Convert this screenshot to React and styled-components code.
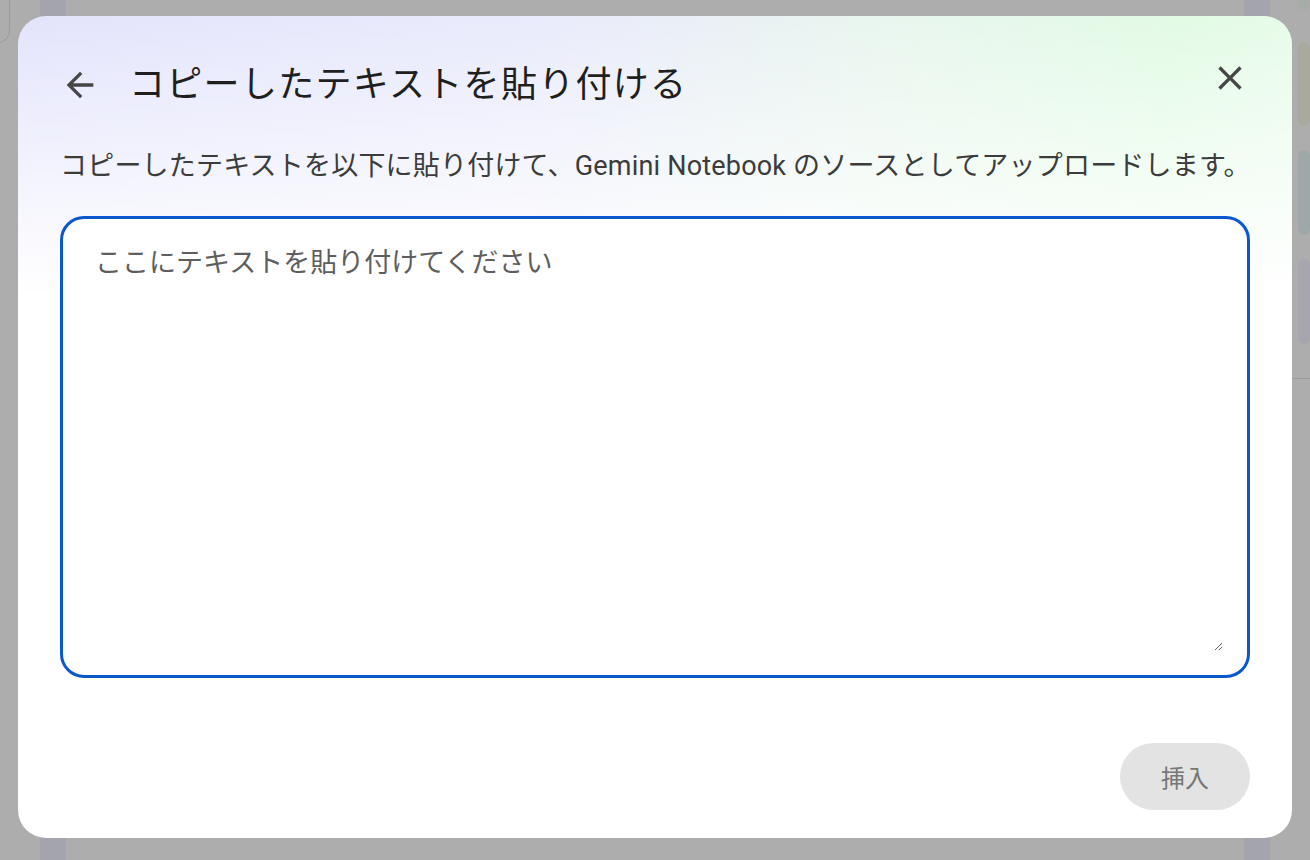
import React from "react";
import styled, { createGlobalStyle } from "styled-components";

const GlobalStyle = createGlobalStyle`
  html, body {
    margin: 0;
    padding: 0;
    width: 100%;
    height: 100%;
    overflow: hidden;
  }
  body {
    font-family: Roboto, "Noto Sans CJK JP", sans-serif;
  }
  #root { height: 100%; }
`;

const Page = styled.div`
  position: relative;
  width: 100vw;
  height: 100vh;
  overflow: hidden;
  background: #adadad;
`;

/* Dimmed app shell behind the modal */
const Shell = styled.div`
  display: flex;
  height: 100%;
`;

const LeftEdge = styled.div`
  width: 40px;
  flex: none;
`;

const EdgeTab = styled.div`
  width: 20px;
  height: 45px;
  margin-left: -10px;
  margin-top: -2px;
  border: 1px solid #9b9b9b;
  border-radius: 0 0 12px 0;
  box-sizing: border-box;
`;

const Rail = styled.div`
  width: 26px;
  flex: none;
  background: #a4a4ae;
`;

const Main = styled.div`
  flex: 1;
`;

const SidePanel = styled.div`
  width: 40px;
  flex: none;
  display: flex;
  flex-direction: column;
  gap: 24px;
  padding: 0 0 0 28px;
  box-sizing: border-box;
`;

const SideCard = styled.div`
  height: ${(p) => p.$h}px;
  margin-top: ${(p) => p.$mt || 0}px;
  border-radius: 10px;
  background: ${(p) => p.$c};
`;

const SideRule = styled.div`
  height: 1px;
  margin-left: -6px;
  margin-top: 10px;
  background: #9a9a9a;
`;

/* Modal layer */
const Scrim = styled.div`
  position: absolute;
  inset: 0;
  display: flex;
  padding: 16px 18px 22px 18px;
  box-sizing: border-box;
`;

const Dialog = styled.div`
  position: relative;
  flex: 1;
  min-width: 0;
  display: flex;
  flex-direction: column;
  padding: 49px 42px 28px 42px;
  box-sizing: border-box;
  border-radius: 28px;
  background:
    linear-gradient(to bottom, rgba(255, 255, 255, 0) 0, #ffffff 280px),
    linear-gradient(100deg, #e3e4fc 0%, #eaebfb 38%, #e9f6ee 62%, #e2fbe5 82%, #eefbf0 100%);
`;

const Header = styled.div`
  display: flex;
  align-items: center;
  height: 40px;
  gap: 29px;
`;

const IconButton = styled.button`
  width: 40px;
  height: 40px;
  flex: none;
  display: flex;
  align-items: center;
  justify-content: center;
  padding: 0;
  border: none;
  background: transparent;
  color: #444746;
  cursor: pointer;
`;

const CloseButton = styled(IconButton)`
  position: absolute;
  top: 42px;
  right: 42px;
`;

const Title = styled.h1`
  margin: 0;
  font-family: Roboto, "Noto Sans CJK JP", sans-serif;
  font-size: 36px;
  line-height: 40px;
  font-weight: 400;
  color: #1f1f1f;
  letter-spacing: 1.3px;
`;

const Description = styled.p`
  margin: 43px 0 0 0;
  font-size: 27px;
  line-height: 36px;
  color: #3c3c3c;
  letter-spacing: 0.2px;
  white-space: nowrap;
`;

const Field = styled.div`
  margin-top: 32px;
  height: 462px;
  display: flex;
  padding: 26px 24px 24px 32px;
  box-sizing: border-box;
  border: 3px solid #0b57d0;
  border-radius: 24px;
  background: #ffffff;
`;

const TextArea = styled.textarea`
  flex: 1;
  min-width: 0;
  border: none;
  outline: none;
  padding: 0;
  margin: 0;
  resize: vertical;
  background: transparent;
  font-family: Roboto, "Noto Sans CJK JP", sans-serif;
  font-size: 27px;
  line-height: 36px;
  color: #1f1f1f;
  caret-color: #0b57d0;

  &::placeholder {
    color: #5e5e5e;
    opacity: 1;
  }
`;

const Footer = styled.div`
  margin-top: 65px;
  display: flex;
  justify-content: flex-end;
`;

const InsertButton = styled.button`
  width: 130px;
  height: 67px;
  border: none;
  border-radius: 34px;
  background: #e3e3e3;
  color: #767676;
  font-family: Roboto, "Noto Sans CJK JP", sans-serif;
  font-size: 24px;
  cursor: default;
`;

const ArrowBack = () => (
  <svg width="40" height="40" viewBox="0 0 24 24" fill="currentColor">
    <path d="M20 11H7.83l5.59-5.59L12 4l-8 8 8 8 1.41-1.41L7.83 13H20v-2z" />
  </svg>
);

const CloseIcon = () => (
  <svg width="42" height="42" viewBox="0 0 24 24" fill="currentColor">
    <path d="M19 6.41L17.59 5 12 10.59 6.41 5 5 6.41 10.59 12 5 17.59 6.41 19 12 13.41 17.59 19 19 17.59 13.41 12z" />
  </svg>
);

export default function App() {
  return (
    <Page>
      <GlobalStyle />
      <Shell>
        <LeftEdge>
          <EdgeTab />
        </LeftEdge>
        <Rail />
        <Main />
        <Rail />
        <SidePanel>
          <SideCard $h={12} $mt={-2} $c="#a5ada6" />
          <SideCard $h={84} $mt={8} $c="#aaa99f" />
          <SideCard $h={85} $c="#9fa7a9" />
          <SideCard $h={85} $c="#a7a6af" />
          <SideRule />
        </SidePanel>
      </Shell>

      <Scrim>
        <Dialog role="dialog" aria-label="コピーしたテキストを貼り付ける">
          <Header>
            <IconButton aria-label="戻る">
              <ArrowBack />
            </IconButton>
            <Title>コピーしたテキストを貼り付ける</Title>
          </Header>
          <CloseButton aria-label="閉じる">
            <CloseIcon />
          </CloseButton>
          <Description>
            コピーしたテキストを以下に貼り付けて、Gemini Notebook のソースとしてアップロードします。
          </Description>
          <Field>
            <TextArea autoFocus placeholder="ここにテキストを貼り付けてください" />
          </Field>
          <Footer>
            <InsertButton disabled>挿入</InsertButton>
          </Footer>
        </Dialog>
      </Scrim>
    </Page>
  );
}
